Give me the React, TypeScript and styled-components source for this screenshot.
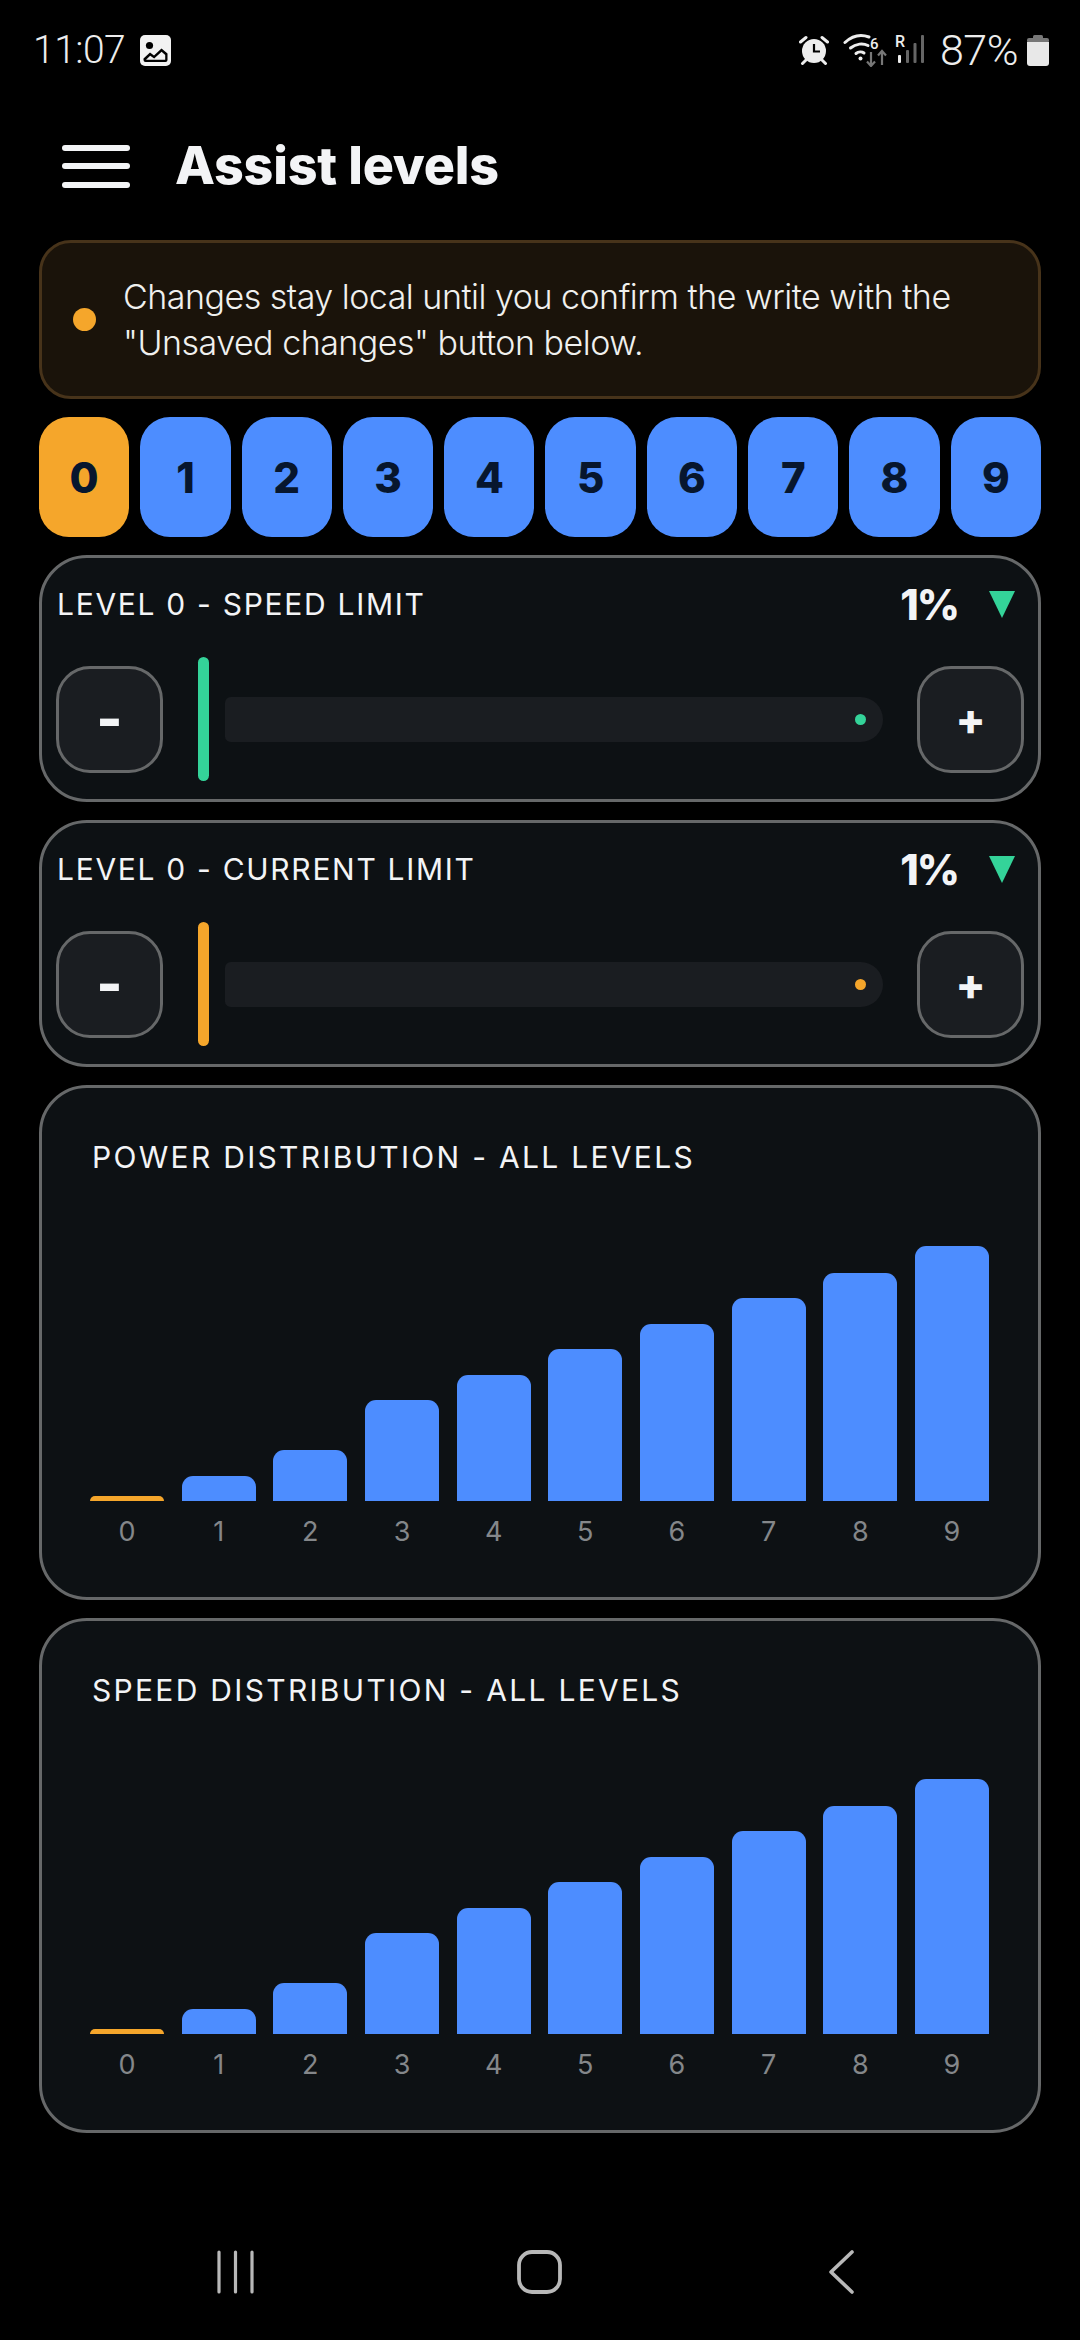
import * as React from "react";
import styled, { createGlobalStyle } from "styled-components";

const GlobalStyle = createGlobalStyle`
	html, body {
		margin: 0;
		padding: 0;
		background: #000;
	}
	* {
		box-sizing: border-box;
	}
`;

const Page = styled.div`
	width: 1080px;
	height: 2340px;
	display: flex;
	flex-direction: column;
	background: #000;
	font-family: Inter, "Liberation Sans", sans-serif;
	color: #f3f4f6;
	overflow: hidden;
`;

const StatusBar = styled.div`
	height: 100px;
	flex: none;
	display: flex;
	align-items: center;
	justify-content: space-between;
	padding: 0 31px 0 33px;
	font-family: Roboto, sans-serif;
	font-weight: 300;
	color: #ededed;
`;

const StatusGroup = styled.div`
	display: flex;
	align-items: center;
`;

const StatusText = styled.span<{ $size: number }>`
	font-size: ${(p) => p.$size}px;
	line-height: 44px;
	letter-spacing: -0.5px;
`;

const Header = styled.header`
	height: 132px;
	flex: none;
	display: flex;
	align-items: center;
	padding-left: 62px;
	gap: 45px;
`;

const Burger = styled.div`
	width: 68px;
	display: flex;
	flex-direction: column;
	gap: 12.5px;
`;

const BurgerLine = styled.span`
	height: 6px;
	border-radius: 3px;
	background: #f3f4f6;
`;

const Title = styled.h1`
	margin: 0;
	font-size: 52px;
	line-height: 60px;
	font-weight: 800;
	letter-spacing: -0.2px;
`;

const Content = styled.main`
	display: flex;
	flex-direction: column;
	gap: 18px;
	padding: 8px 39px 0;
`;

const Notice = styled.div`
	height: 159px;
	display: flex;
	align-items: center;
	gap: 27px;
	padding: 0 31px;
	background: #1a130a;
	border: 3px solid #47331a;
	border-radius: 32px;
`;

const NoticeDot = styled.span`
	width: 23px;
	height: 23px;
	flex: none;
	border-radius: 50%;
	background: #f5a62b;
`;

const NoticeText = styled.p`
	margin: 0;
	font-size: 34px;
	line-height: 46px;
	font-weight: 300;
	letter-spacing: -0.5px;
	color: #f0f0ee;
`;

const LevelRow = styled.div`
	display: flex;
	gap: 11px;
`;

const LevelButton = styled.div<{ $active?: boolean }>`
	flex: 1;
	height: 120px;
	display: flex;
	align-items: center;
	justify-content: center;
	border-radius: 30px;
	background: ${(p) => (p.$active ? "#f5a62b" : "#4d8dff")};
	color: #07162e;
	font-size: 42px;
	font-weight: 800;
`;

const Card = styled.section`
	background: #0d1114;
	border: 3px solid #666869;
	border-radius: 48px;
`;

const LimitCard = styled(Card)`
	height: 247px;
	padding: 14px 14px 0;
`;

const LimitHead = styled.div`
	height: 64px;
	display: flex;
	align-items: center;
	justify-content: space-between;
	padding: 0 9px 0 1px;
	margin-bottom: 21px;
`;

const Label = styled.div`
	font-size: 30px;
	line-height: 36px;
	font-weight: 400;
	letter-spacing: 1.7px;
	color: #f3f4f6;
`;

const ValueGroup = styled.div`
	display: flex;
	align-items: center;
	gap: 31px;
`;

const Value = styled.span`
	font-size: 42px;
	font-weight: 800;
	letter-spacing: -2px;
`;

const Triangle = styled.span`
	width: 0;
	height: 0;
	border-left: 13.5px solid transparent;
	border-right: 13.5px solid transparent;
	border-top: 27px solid #34d399;
`;

const Controls = styled.div`
	display: flex;
	align-items: center;
	gap: 35px;
`;

const StepButton = styled.div<{ $size: number }>`
	width: 107px;
	height: 107px;
	flex: none;
	display: flex;
	align-items: center;
	justify-content: center;
	background: #1a1d21;
	border: 3px solid #666869;
	border-radius: 34px;
	font-size: ${(p) => p.$size}px;
	line-height: 1;
	font-weight: 800;
	color: #f3f4f6;
`;

const Slider = styled.div`
	flex: 1;
	display: flex;
	align-items: center;
	gap: 16px;
	margin-right: -1px;
`;

const Thumb = styled.span<{ $color: string }>`
	width: 11px;
	height: 124px;
	flex: none;
	border-radius: 6px;
	background: ${(p) => p.$color};
`;

const Track = styled.div`
	flex: 1;
	height: 45px;
	display: flex;
	align-items: center;
	justify-content: flex-end;
	padding-right: 17px;
	background: #1a1d21;
	border-radius: 6px 23px 23px 6px;
`;

const TrackDot = styled.span<{ $color: string }>`
	width: 11px;
	height: 11px;
	border-radius: 50%;
	background: ${(p) => p.$color};
`;

const ChartCard = styled(Card)`
	height: 515px;
	padding: 51px 49px 0 48px;
`;

const ChartTitle = styled(Label)`
	letter-spacing: 2.3px;
	padding-left: 2px;
`;

const Plot = styled.div`
	height: 255px;
	margin-top: 71px;
	display: flex;
	align-items: flex-end;
	gap: 17.6px;
`;

const Bar = styled.div<{ $active?: boolean }>`
	flex: 1;
	border-radius: ${(p) => (p.$active ? "5px 5px 0 0" : "11px 11px 0 0")};
	background: ${(p) => (p.$active ? "#f5a62b" : "#4d8dff")};
`;

const Axis = styled.div`
	margin-top: 13px;
	display: flex;
	gap: 17.6px;
`;

const Tick = styled.span`
	flex: 1;
	text-align: center;
	font-size: 27px;
	line-height: 36px;
	font-weight: 400;
	color: #84878a;
`;

const NavBar = styled.nav`
	margin-top: auto;
	height: 112px;
	flex: none;
	display: flex;
	justify-content: space-between;
	padding: 22px 226px 0 217px;
`;

const levels = [0, 1, 2, 3, 4, 5, 6, 7, 8, 9];
const heights = [5, 25.5, 51, 101, 126.5, 152, 177.5, 203, 228.5, 255];

function ImageIcon() {
	return (
		<svg width="31" height="31" viewBox="0 0 31 31" style={{ marginLeft: 15 }}>
			<rect width="31" height="31" rx="5" fill="#f2f2f2" />
			<circle cx="9.5" cy="10.5" r="3.6" fill="#000" />
			<path d="M3.5 23.5 L10 17.5 L14 20.5 L21.5 13.5 L27.5 18.5 V25 Q27.5 27 25.5 27 H5.5 Q3.5 27 3.5 25 Z" fill="#000" />
			<path d="M6 24.7 L10.2 20.8 L14.2 23.6 L21.6 16.8 L25.2 19.9 V24.7 Z" fill="#f2f2f2" />
		</svg>
	);
}

function AlarmIcon() {
	return (
		<svg width="30" height="30" viewBox="0 0 30 30" style={{ marginRight: 14 }}>
			<circle cx="15" cy="16" r="12" fill="#ededed" />
			<path d="M15 9 V16.5 H21" fill="none" stroke="#000" strokeWidth="2.2" />
			<path d="M1.5 7 L7 2.5 M28.5 7 L23 2.5" stroke="#ededed" strokeWidth="3" strokeLinecap="round" />
			<path d="M3.5 28.5 L7 25 M26.5 28.5 L23 25" stroke="#ededed" strokeWidth="3" strokeLinecap="round" />
		</svg>
	);
}

function WifiIcon() {
	return (
		<svg width="46" height="34" viewBox="0 0 46 34" style={{ marginRight: 6 }}>
			<g fill="none" stroke="#ededed" strokeWidth="3" strokeLinecap="round">
				<path d="M2 9.5 C10 2 19 1.5 26 4" />
				<path d="M7.5 15 C13 10.5 20 10 25 12.5" />
				<path d="M13 20.5 C15.5 18.5 19 18.5 21 20" />
			</g>
			<circle cx="17.5" cy="25.5" r="2" fill="#ededed" />
			<text x="27" y="16" fontFamily="Roboto, sans-serif" fontSize="15" fontWeight="500" fill="#ededed">6</text>
			<g fill="none" stroke="#777" strokeWidth="2.2">
				<path d="M28 19 V33 M24 28.5 L28 33 L32 28.5" />
				<path d="M39 32 V18 M35 22.5 L39 18 L43 22.5" />
			</g>
		</svg>
	);
}

function SignalIcon() {
	return (
		<svg width="30" height="34" viewBox="0 0 30 34" style={{ marginRight: 15 }}>
			<text x="0" y="14" fontFamily="Roboto, sans-serif" fontSize="16" fontWeight="500" fill="#ededed">R</text>
			<rect x="3" y="22" width="3" height="8" rx="1" fill="#ededed" />
			<rect x="11" y="17" width="3" height="13" rx="1" fill="#666" />
			<rect x="18.5" y="10" width="3" height="20" rx="1" fill="#666" />
			<rect x="26" y="2" width="3" height="28" rx="1" fill="#666" />
		</svg>
	);
}

function BatteryIcon() {
	return (
		<svg width="22" height="31" viewBox="0 0 22 31" style={{ marginLeft: 9 }}>
			<rect x="6" y="0" width="10" height="5" rx="1.5" fill="#777" />
			<rect x="0" y="3" width="22" height="5" rx="2" fill="#777" />
			<path d="M0 7 H22 V28 Q22 31 19 31 H3 Q0 31 0 28 Z" fill="#e8e8e8" />
		</svg>
	);
}

function LimitPanel(props: { title: string; color: string }) {
	return (
		<LimitCard>
			<LimitHead>
				<Label>{props.title}</Label>
				<ValueGroup>
					<Value>1%</Value>
					<Triangle />
				</ValueGroup>
			</LimitHead>
			<Controls>
				<StepButton $size={56}>-</StepButton>
				<Slider>
					<Thumb $color={props.color} />
					<Track>
						<TrackDot $color={props.color} />
					</Track>
				</Slider>
				<StepButton $size={44}>+</StepButton>
			</Controls>
		</LimitCard>
	);
}

function ChartPanel(props: { title: string }) {
	return (
		<ChartCard>
			<ChartTitle>{props.title}</ChartTitle>
			<Plot>
				{levels.map((l) => (
					<Bar key={l} $active={l === 0} style={{ height: heights[l] }} />
				))}
			</Plot>
			<Axis>
				{levels.map((l) => (
					<Tick key={l}>{l}</Tick>
				))}
			</Axis>
		</ChartCard>
	);
}

export default function App() {
	return (
		<Page>
			<GlobalStyle />
			<StatusBar>
				<StatusGroup>
					<StatusText $size={39}>11:07</StatusText>
					<ImageIcon />
				</StatusGroup>
				<StatusGroup>
					<AlarmIcon />
					<WifiIcon />
					<SignalIcon />
					<StatusText $size={43}>87%</StatusText>
					<BatteryIcon />
				</StatusGroup>
			</StatusBar>
			<Header>
				<Burger>
					<BurgerLine />
					<BurgerLine />
					<BurgerLine />
				</Burger>
				<Title>Assist levels</Title>
			</Header>
			<Content>
				<Notice>
					<NoticeDot />
					<NoticeText>
						Changes stay local until you confirm the write with the "Unsaved changes" button below.
					</NoticeText>
				</Notice>
				<LevelRow>
					{levels.map((l) => (
						<LevelButton key={l} $active={l === 0}>{l}</LevelButton>
					))}
				</LevelRow>
				<LimitPanel title="LEVEL 0 - SPEED LIMIT" color="#34d399" />
				<LimitPanel title="LEVEL 0 - CURRENT LIMIT" color="#f5a62b" />
				<ChartPanel title="POWER DISTRIBUTION - ALL LEVELS" />
				<ChartPanel title="SPEED DISTRIBUTION - ALL LEVELS" />
			</Content>
			<NavBar>
				<svg width="37" height="44" viewBox="0 0 37 44">
					<path d="M2 2 V42 M18.5 2 V42 M35 2 V42" stroke="#b8b8b8" strokeWidth="3.2" strokeLinecap="round" />
				</svg>
				<svg width="50" height="44" viewBox="0 0 50 44">
					<rect x="2" y="2" width="41" height="40" rx="13" fill="none" stroke="#b8b8b8" strokeWidth="3.8" />
				</svg>
				<svg width="25" height="44" viewBox="0 0 25 44">
					<path d="M23 2 L2 22 L23 42" fill="none" stroke="#b8b8b8" strokeWidth="3.6" strokeLinecap="round" strokeLinejoin="round" />
				</svg>
			</NavBar>
		</Page>
	);
}
